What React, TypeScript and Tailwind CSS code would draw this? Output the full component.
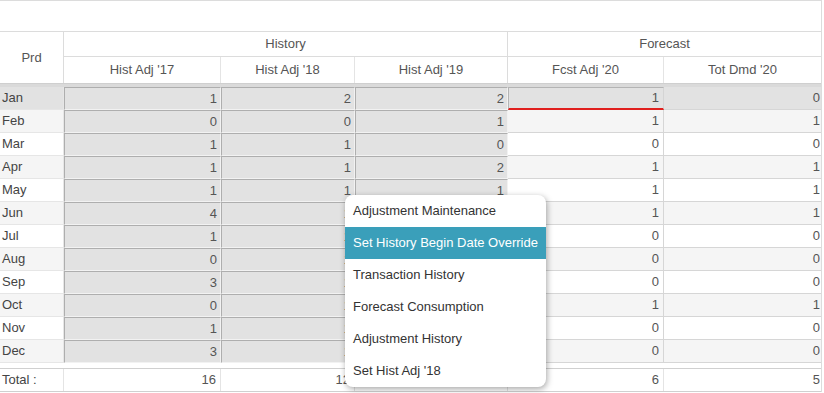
import React from "react";

const months = ["Jan", "Feb", "Mar", "Apr", "May", "Jun", "Jul", "Aug", "Sep", "Oct", "Nov", "Dec"];
const hist17 = [1, 0, 1, 1, 1, 4, 1, 0, 3, 0, 1, 3];
const hist18 = [2, 0, 1, 1, 1, 1, 1, 1, 1, 1, 1, 1];
const hist19 = [2, 1, 0, 2, 1, 1, 0, 1, 2, 0, 1, 1];
const fcst = [1, 1, 0, 1, 1, 1, 0, 0, 0, 1, 0, 0];
const tot = [0, 1, 0, 1, 1, 1, 0, 0, 0, 1, 0, 0];

const sum = (a: number[]) => a.reduce((s, n) => s + n, 0);

const menuItems = [
  "Adjustment Maintenance",
  "Set History Begin Date Override",
  "Transaction History",
  "Forecast Consumption",
  "Adjustment History",
  "Set Hist Adj '18",
];

const HistCell = ({ w, v }: { w: string; v: number }) => (
  <div className={`${w} h-full`}>
    <div className="h-full bg-[#e2e2e2] border border-t-[#aeaeae] border-l-[#aeaeae] border-r-[#f2f2f2] border-b-[#f2f2f2] flex items-center justify-end pr-[3px]">
      {v}
    </div>
  </div>
);

export default function App() {
  return (
    <div className="w-[824px] h-[393px] bg-white overflow-hidden relative font-['Liberation_Sans',Arial,sans-serif] text-[13px] text-[#555]">
      <div className="w-[822px] border-t border-r border-[#dcdcdc]">
        <div className="h-[30px]" />

        {/* header */}
        <div className="flex border-t border-[#dcdcdc]">
          <div className="w-[64px] border-r border-[#dcdcdc] flex items-center justify-center">Prd</div>
          <div className="flex flex-col">
            <div className="flex h-[25px] border-b border-[#dcdcdc]">
              <div className="w-[444px] border-r border-[#dcdcdc] flex items-center justify-center">History</div>
              <div className="w-[313px] flex items-center justify-center">Forecast</div>
            </div>
            <div className="flex h-[26px]">
              <div className="w-[157px] border-r border-[#e4e4e4] flex items-center justify-center">Hist Adj '17</div>
              <div className="w-[134px] border-r border-[#e4e4e4] flex items-center justify-center">Hist Adj '18</div>
              <div className="w-[153px] border-r border-[#dcdcdc] flex items-center justify-center">Hist Adj '19</div>
              <div className="w-[156px] border-r border-[#e4e4e4] flex items-center justify-center">Fcst Adj '20</div>
              <div className="w-[157px] flex items-center justify-center">Tot Dmd '20</div>
            </div>
          </div>
        </div>
        <div className="h-[4px] bg-[#dadada] border-t border-[#cfcfcf]" />

        {/* body */}
        {months.map((m, i) => {
          const sel = i === 0;
          const alt = i % 2 === 1;
          const rowBg = sel ? "bg-[#e2e2e2]" : alt ? "bg-[#f5f5f5]" : "bg-white";
          return (
            <div key={m} className="flex h-[23px]">
              <div className={`w-[64px] ${rowBg} border-r border-b border-[#e6e6e6] pl-[2px] flex items-center text-[#444]`}>
                {m}
              </div>
              <HistCell w="w-[157px]" v={hist17[i]} />
              <HistCell w="w-[134px]" v={hist18[i]} />
              <HistCell w="w-[153px]" v={hist19[i]} />
              {sel ? (
                <div className="w-[156px] h-full bg-[#e2e2e2] border-t border-l border-[#b4b4b4] border-b-2 border-b-[#e0201e] border-r border-r-[#d4d4d4] flex items-center justify-end pr-[4px]">
                  {fcst[i]}
                </div>
              ) : (
                <div className={`w-[156px] h-full ${rowBg} border-r border-b border-[#d6d6d6] flex items-center justify-end pr-[4px]`}>
                  {fcst[i]}
                </div>
              )}
              <div className={`w-[157px] h-full ${rowBg} border-b border-[#d6d6d6] flex items-center justify-end pr-[1px]`}>
                {tot[i]}
              </div>
            </div>
          );
        })}

        <div className="h-[5px]" />

        {/* totals */}
        <div className="flex h-[24px] border-t border-b border-[#d0d0d0]">
          <div className="w-[64px] border-r border-[#e4e4e4] pl-[2px] flex items-center text-[#444]">Total :</div>
          <div className="w-[157px] border-r border-[#e4e4e4] flex items-center justify-end pr-[4px]">{sum(hist17)}</div>
          <div className="w-[134px] border-r border-[#e4e4e4] flex items-center justify-end pr-[4px]">{sum(hist18)}</div>
          <div className="w-[153px] border-r border-[#e4e4e4] flex items-center justify-end pr-[4px]">{sum(hist19)}</div>
          <div className="w-[156px] border-r border-[#e4e4e4] flex items-center justify-end pr-[4px]">{sum(fcst)}</div>
          <div className="w-[157px] flex items-center justify-end pr-[1px]">{sum(tot)}</div>
        </div>
      </div>

      {/* context menu */}
      <div className="absolute left-[345px] top-[195px] w-[201px] bg-white rounded-lg shadow-[1px_2px_6px_rgba(0,0,0,0.35)] overflow-hidden">
        {menuItems.map((t, i) => (
          <div
            key={t}
            className={`h-[32px] px-[8px] flex items-center ${i === 1 ? "bg-[#3a9fba] text-white" : "text-[#333]"}`}
          >
            {t}
          </div>
        ))}
      </div>
    </div>
  );
}
